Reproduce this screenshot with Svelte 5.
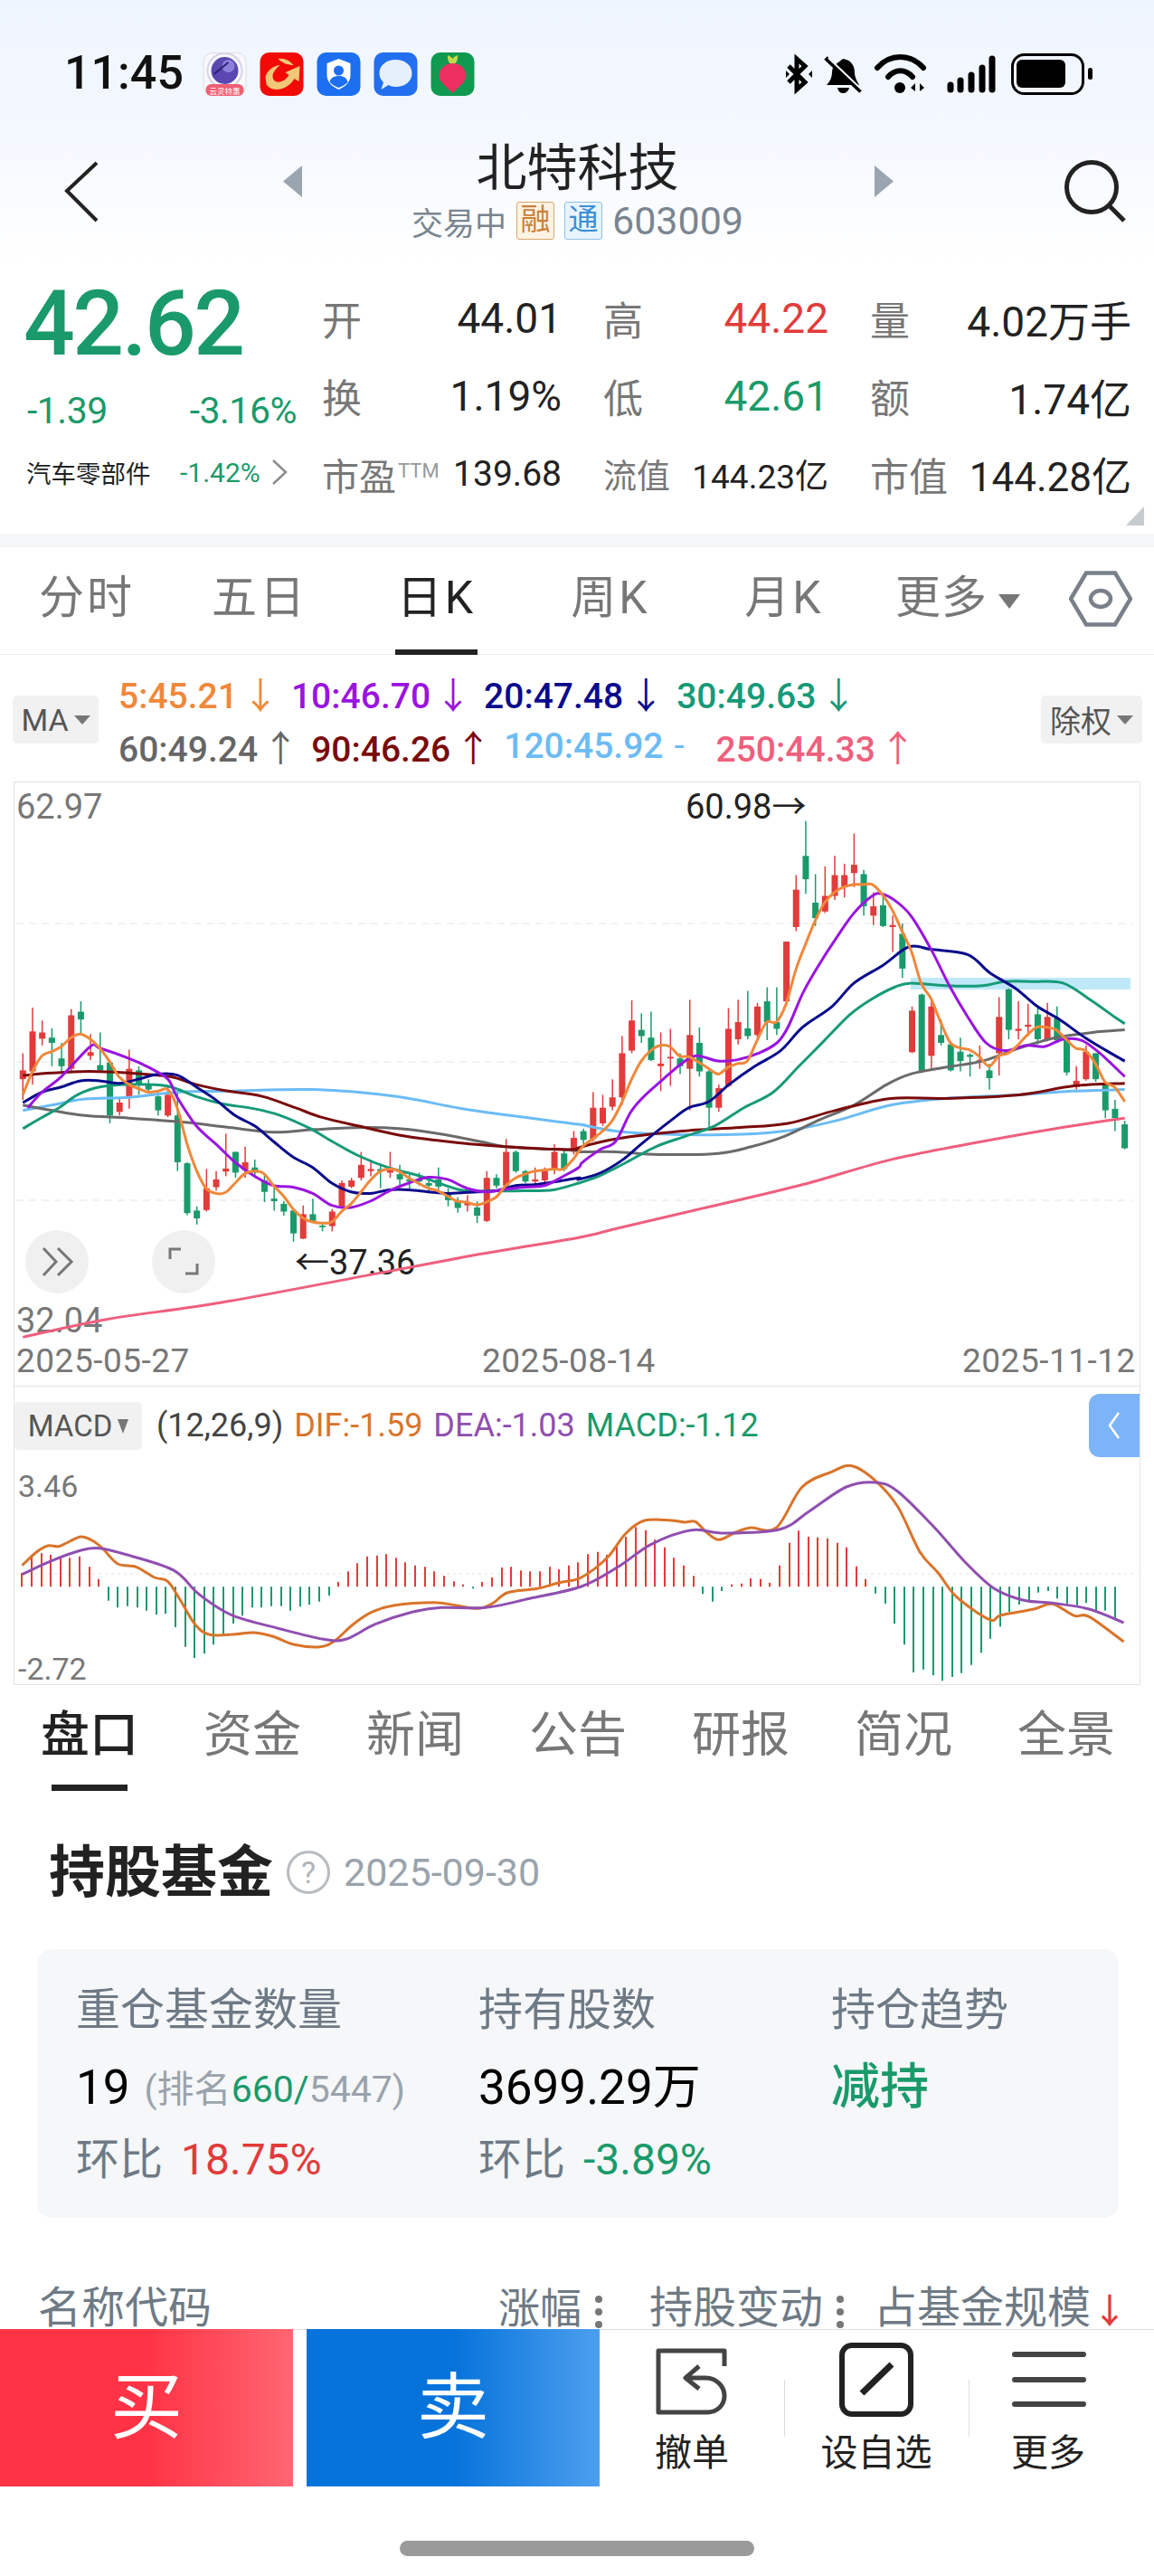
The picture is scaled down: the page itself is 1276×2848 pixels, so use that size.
<script>
	const RED = '#e23b3b';
	const GREEN = '#1a9a6a';

	// chart readings: two scales, one for each half of the k-line chart
	const leftPt = (x, y) => [x / 2.45, 600 + y / 1.742];
	const rightPt = (x, y) => [640 + x / 2.465, 600 + y / 1.742];
	const macdPt = (x, y) => [x / 1.229, 1500 + y / 3];
	const kY = (v) => 600 + v / 1.742;
	const kX = (i) => 25.3 + i * 10.687;

	// wick top, body top, body bottom, wick bottom, up?
	const candles = [
		[985,1018,1035,1075,1],[897,943,1020,1045,1],[922,945,957,970,1],[937,955,965,1010,0],[965,995,1010,1020,0],
		[900,912,1015,1020,1],[885,905,920,948,0],[948,983,990,998,1],[945,1008,1018,1020,0],[1002,1003,1105,1120,0],
		[1070,1080,1098,1105,1],[978,1015,1068,1092,1],[1010,1018,1045,1065,0],[1035,1045,1055,1060,0],[1060,1068,1095,1105,0],
		[1050,1065,1105,1108,1],[1060,1105,1195,1212,0],[1195,1197,1293,1297,0],[1280,1288,1303,1315,0],[1208,1245,1287,1290,1],
		[1212,1228,1243,1250,1],[1140,1207,1213,1222,1],[1175,1175,1215,1225,0],[1165,1195,1210,1225,1],[1190,1205,1215,1225,0],
		[1220,1230,1252,1272,0],[1243,1265,1270,1288,0],[1270,1275,1290,1298,0],[1287,1288,1332,1348,0],[1278,1295,1342,1343,1],
		[1265,1295,1308,1310,0],[1310,1317,1320,1328,0],[1285,1290,1318,1328,1],[1230,1235,1280,1282,1],[1225,1230,1242,1245,1],
		[1175,1200,1225,1230,1],[1190,1208,1212,1222,1],[1200,1208,1212,1245,0],[1175,1205,1215,1225,1],[1200,1218,1228,1240,0],
		[1215,1228,1232,1248,0],[1215,1228,1232,1240,0],[1222,1235,1240,1252,0],[1205,1228,1242,1248,0],[1245,1255,1268,1280,0],
		[1262,1268,1283,1292,0],[1258,1272,1278,1290,1],[1270,1282,1298,1312,0],[1212,1225,1308,1310,1],[1218,1225,1240,1245,0],
		[1150,1175,1240,1245,1],[1172,1175,1212,1215,0],[1210,1212,1232,1235,0],[1205,1228,1232,1240,1],[1205,1212,1230,1235,1],
		[1160,1175,1210,1218,1],[1170,1178,1208,1212,0],[1135,1148,1175,1180,1],[1130,1135,1152,1165,0],[1060,1090,1150,1155,1],
		[1065,1090,1120,1125,1],[1035,1070,1088,1095,1],[952,985,1070,1085,1],[883,922,980,985,1],[908,940,952,965,0],
		[905,955,998,1000,0],[945,1005,1010,1058,1],[938,992,995,1048,1],[985,995,1010,1025,0],[882,950,1015,1095,1],
		[935,965,1020,1030,0],[1015,1020,1090,1130,0],[1045,1052,1090,1098,1],[898,938,1048,1050,1],[882,925,958,968,1],
		[865,937,952,958,0],[888,895,950,955,1],[858,885,925,960,0],[858,925,938,950,0],[770,770,885,890,1],
		[642,670,742,750,1],[538,605,650,678,0],[640,695,725,740,0],[625,682,712,715,1],[605,642,682,690,1],
		[620,642,665,685,1],[562,622,638,665,1],[632,640,702,720,0],[675,702,720,738,1],[680,700,740,742,0],
		[720,738,742,790,1],[735,755,822,840,0],[895,903,983,985,1],[870,872,1020,1022,0],[885,895,990,1015,1],
		[920,950,965,970,0],[965,968,1018,1020,0],[955,982,1000,1020,0],[985,988,992,1030,0],[970,998,1002,1015,1],
		[1005,1018,1033,1055,0],[877,915,985,1028,1],[860,862,940,958,0],[885,938,942,958,1],[890,930,934,952,1],
		[898,910,958,968,0],[888,915,960,962,1],[895,918,960,965,0],[955,958,1022,1028,0],[1010,1038,1050,1055,1],
		[970,982,1035,1038,1],[985,985,1035,1040,0],[1040,1042,1095,1110,0],[1075,1092,1110,1135,0],[1115,1122,1168,1170,0]
	];

	const maLines = [
		{ color: '#ef5f7e', left: [62,1532,285,1498,600,1465,1000,1412,1300,1372,1568,1340], right: [100,1323,300,1290,600,1240,850,1190,1100,1155,1300,1130,1488,1110] },
		{ color: '#6bbcf5', left: [62,1095,140,1085,230,1073,350,1070,480,1060,620,1058,850,1055,1070,1068,1280,1095,1568,1122], right: [0,1122,100,1135,200,1140,400,1142,560,1135,700,1115,850,1085,1000,1072,1200,1065,1350,1058,1488,1055] },
		{ color: '#6a6a6a', left: [62,1085,140,1095,230,1105,350,1110,500,1118,620,1128,740,1137,850,1132,980,1128,1080,1130,1190,1140,1300,1155,1370,1165,1500,1170,1568,1172], right: [0,1175,100,1175,220,1180,380,1178,470,1165,560,1145,650,1115,750,1085,840,1045,905,1025,1000,1012,1100,1000,1200,975,1300,955,1400,945,1488,940] },
		{ color: '#7a0a0a', left: [62,1028,140,1023,240,1020,350,1023,460,1030,530,1045,610,1057,710,1068,800,1090,870,1108,970,1125,1100,1145,1250,1158,1370,1165,1500,1170,1568,1170], right: [0,1167,100,1150,280,1135,440,1128,570,1120,700,1095,850,1072,1000,1072,1200,1065,1350,1048,1488,1043] },
		{ color: '#169a78', left: [62,1130,110,1110,160,1090,210,1065,270,1050,350,1045,450,1048,530,1068,600,1082,690,1092,760,1105,840,1130,900,1155,970,1182,1050,1205,1130,1220,1200,1238,1260,1250,1340,1250,1420,1250,1500,1248,1568,1235], right: [0,1235,60,1220,130,1195,210,1165,290,1145,370,1125,450,1090,530,1060,600,1010,670,960,740,910,800,880,860,858,905,850,1000,855,1100,855,1160,847,1240,847,1320,850,1400,885,1460,915,1488,928] },
		{ color: '#0a0a8c', left: [62,1080,114,1060,166,1050,218,1038,270,1038,322,1043,375,1035,429,1025,480,1027,532,1050,585,1075,637,1105,690,1125,741,1155,794,1185,847,1205,899,1235,951,1252,1003,1255,1055,1248,1107,1248,1160,1252,1212,1255,1292,1252,1344,1250,1397,1240,1448,1238,1500,1233,1568,1225], right: [0,1228,60,1215,120,1190,170,1160,250,1115,300,1090,355,1078,410,1045,480,1010,550,980,610,935,690,895,750,850,830,815,900,780,960,785,1060,795,1120,830,1190,860,1250,895,1310,920,1380,955,1450,985,1488,1000] },
		{ color: '#9a14e0', left: [75,1090,114,1060,166,1030,245,972,270,975,349,995,402,1012,455,1035,480,1070,532,1125,585,1160,637,1195,690,1222,741,1240,794,1243,847,1255,899,1278,951,1282,1003,1270,1055,1250,1107,1235,1160,1224,1212,1228,1265,1245,1317,1252,1370,1247,1422,1243,1475,1240,1526,1222,1568,1205], right: [10,1195,60,1170,100,1155,140,1100,175,1070,230,1035,280,1005,320,990,380,1000,430,998,490,985,540,965,570,935,610,870,650,820,700,765,750,715,800,682,825,678,860,690,905,720,960,785,1010,855,1060,915,1110,965,1160,980,1220,970,1270,972,1320,958,1370,960,1420,985,1488,1030] },
		{ color: '#f0883a', left: [62,1065,88,1020,114,990,140,982,166,972,192,955,218,948,245,958,270,975,296,1000,322,1030,349,1045,375,1053,402,1060,429,1058,455,1055,480,1090,507,1160,532,1210,558,1245,585,1255,611,1253,637,1235,663,1217,690,1212,715,1217,741,1240,768,1260,794,1285,820,1302,847,1310,873,1312,899,1310,925,1290,951,1275,977,1253,1003,1230,1029,1213,1055,1208,1081,1212,1107,1225,1133,1235,1160,1245,1186,1250,1212,1260,1238,1270,1265,1272,1292,1277,1317,1272,1344,1262,1370,1240,1397,1225,1422,1218,1448,1212,1475,1210,1500,1208,1526,1208,1552,1190], right: [10,1165,38,1150,65,1135,91,1115,117,1080,144,1035,170,1000,196,980,222,970,248,972,274,990,301,992,328,1003,355,1015,380,1025,407,1012,433,1005,459,1000,486,960,512,925,538,925,565,890,591,825,618,775,644,730,670,695,697,675,722,665,748,660,776,660,800,660,828,680,855,710,881,750,907,790,933,850,960,880,986,925,1013,965,1040,975,1063,978,1090,990,1118,1010,1145,990,1170,985,1196,970,1222,950,1248,935,1275,935,1301,940,1328,958,1354,975,1381,980,1408,1005,1434,1040,1460,1050,1488,1078] }
	];

	function pairs(flat, map) {
		const out = [];
		for (let i = 0; i < flat.length; i += 2) out.push(map(flat[i], flat[i + 1]));
		return out;
	}

	// catmull-rom through the read points, so the averages stay round
	function smooth(pts) {
		let d = `M${pts[0][0].toFixed(1)} ${pts[0][1].toFixed(1)}`;
		for (let i = 0; i < pts.length - 1; i++) {
			const p0 = pts[i - 1] || pts[i];
			const p1 = pts[i];
			const p2 = pts[i + 1];
			const p3 = pts[i + 2] || p2;
			const c1 = [p1[0] + (p2[0] - p0[0]) / 6, p1[1] + (p2[1] - p0[1]) / 6];
			const c2 = [p2[0] - (p3[0] - p1[0]) / 6, p2[1] - (p3[1] - p1[1]) / 6];
			d += ` C${c1[0].toFixed(1)} ${c1[1].toFixed(1)} ${c2[0].toFixed(1)} ${c2[1].toFixed(1)} ${p2[0].toFixed(1)} ${p2[1].toFixed(1)}`;
		}
		return d;
	}

	const maPaths = maLines.map((l) => ({
		color: l.color,
		d: smooth([...pairs(l.left, leftPt), ...pairs(l.right, rightPt)])
	}));

	const legend = [
		[
			{ t: '5:45.21', a: '↓', c: '#f0883a' },
			{ t: '10:46.70', a: '↓', c: '#9a14e0' },
			{ t: '20:47.48', a: '↓', c: '#0a0a8c' },
			{ t: '30:49.63', a: '↓', c: '#169a78' }
		],
		[
			{ t: '60:49.24', a: '↑', c: '#666666' },
			{ t: '90:46.26', a: '↑', c: '#7a0a0a' },
			{ t: '120:45.92', a: '-', c: '#6bbcf5' },
			{ t: '250:44.33', a: '↑', c: '#ef5f7e' }
		]
	];

	// macd histogram: bar tip on the zoomed scale, baseline at 766
	const histTips = [
		720,660,655,660,665,670,665,700,740,812,835,830,835,845,858,855,900,965,1002,988,958,930,888,862,835,835,830,830,845,832,825,815,795,
		750,715,688,665,662,658,670,685,695,700,715,730,748,758,772,750,735,702,700,712,715,715,700,708,695,685,658,650,660,630,600,568,578,610,635,670,695,730,
		790,815,780,758,755,738,740,752,695,620,580,600,602,605,620,635,698,740,
		788,822,888,958,1050,1040,1060,1078,1065,1052,1025,985,938,898,850,825,810,785,780,805,822,830,820,845,845,870
	];
	const histBase = macdPt(0, 766)[1];
	const hist = histTips.map((tip, i) => ({
		x: Math.round(macdPt(30 + i * 13.03, 0)[0]),
		y: macdPt(0, tip)[1],
		color: tip < 766 ? RED : GREEN
	}));
	const dif = smooth(pairs([30,695,50,650,65,630,80,632,95,615,110,600,125,612,140,640,160,690,185,700,210,735,228,748,245,810,265,890,285,925,320,923,345,918,370,930,400,958,435,965,455,945,480,890,505,850,535,828,590,818,620,828,650,838,670,820,690,785,730,772,760,752,790,735,825,670,850,590,875,547,910,545,930,552,945,550,960,585,977,610,1000,585,1020,570,1055,570,1090,435,1130,385,1158,365,1190,415,1220,500,1250,650,1275,720,1300,800,1345,875,1360,860,1405,840,1430,823,1460,862,1480,865,1527,948], macdPt));
	const dea = smooth(pairs([30,725,70,680,110,645,135,638,165,655,235,710,270,790,315,860,380,905,440,940,470,940,510,890,560,850,600,835,660,835,720,805,790,765,840,700,885,625,940,578,985,588,1060,575,1100,515,1150,435,1190,420,1220,450,1270,570,1310,680,1350,770,1390,810,1430,820,1480,840,1527,885], macdPt));

	const rangeTabs = ['分时', '五日', '日K', '周K', '月K'];
	const infoTabs = ['盘口', '资金', '新闻', '公告', '研报', '简况', '全景'];
</script>

<div class="page">
	<div class="head">
		<div class="status">
			<span class="time">11:45</span>
			<div class="apps">
				<svg class="app" viewBox="0 0 48 48">
					<rect x="0.5" y="0.5" width="47" height="47" rx="10" fill="#f8f8fd" stroke="#ddd" />
					<circle cx="24" cy="20" r="19" fill="none" stroke="#d5d3e6" stroke-width="2" />
					<circle cx="24" cy="20" r="15" fill="#5a47b0" />
					<circle cx="28" cy="15" r="7" fill="#8d80dd" />
					<path d="M12 24 L28 11" stroke="#2c2170" stroke-width="2" />
					<rect x="3" y="35" width="42" height="13" rx="6" fill="#ef5f74" />
					<text x="24" y="45.5" class="app-tag">云灵特惠</text>
				</svg>
				<svg class="app" viewBox="0 0 48 48">
					<rect width="48" height="48" rx="10" fill="#f20a06" />
					<path d="M20 7 C27 6 33 9 37 14 C31 14 25 12 20 7Z M6 27 C8 19 15 15 22 14 C16 19 12 25 15 30 C18 35 27 33 32 25 L28 22 L44 15 L43 32 L38 29 C30 42 13 45 7 35Z" fill="#f1c778" />
				</svg>
				<svg class="app" viewBox="0 0 48 48">
					<rect width="48" height="48" rx="10" fill="#1b6ff0" />
					<path d="M24 7 L37 12 V25 C37 33 31 38 24 41 C17 38 11 33 11 25 V12Z" fill="#fff" />
					<circle cx="24" cy="20" r="5.5" fill="#1b6ff0" />
					<path d="M14 33 C15 27 20 26 24 26 C28 26 33 27 34 33 C31 36 27 38 24 39 C21 38 17 36 14 33Z" fill="#1b6ff0" />
				</svg>
				<svg class="app" viewBox="0 0 48 48">
					<rect width="48" height="48" rx="10" fill="#226ff0" />
					<path d="M24 8 C34 8 42 14 42 23 C42 32 34 38 24 38 C21 38 18 37 16 36 L8 41 L10.500 33 C7.500 30 6 27 6 23 C6 14 14 8 24 8Z" fill="#e6f0fd" />
				</svg>
				<svg class="app" viewBox="0 0 48 48">
					<rect width="48" height="48" rx="10" fill="#0f9a50" />
					<path d="M24 14 C20 12 18 9 18.500 3 C21 4 23 5 24 7 C25 5 27 4 29.500 3 C30 9 28 12 24 14Z" fill="#c7d94a" />
					<path d="M24 12 C33 12 39 19 39 26 C39 33 29 39 24 45 C19 39 9 33 9 26 C9 19 15 12 24 12Z" fill="#ee2f62" />
				</svg>
			</div>
			<svg class="sys" viewBox="0 0 360 64">
				<path d="M12 23 L30 41 L21 49 V15 L30 23 L12 41" fill="none" stroke="#000" stroke-width="5" />
				<path d="M9 28 L13 32 L9 36Z M38 28 L34 32 L38 36Z" fill="#000" />
				<path d="M72 15 C81 16 85 23 85 30 C85 36 88 40 90 44 H54 C58 40 60 35 60 30 C60 27 61 24 63 22Z" fill="#000" />
				<path d="M66 47 H79 C78 51 75 53 72 53 C69 53 67 51 66 47Z" fill="#000" />
				<path d="M53 14 L92 51" stroke="#000" stroke-width="5" />
				<path d="M56 14 L95 51" stroke="#f4f8ff" stroke-width="2" />
				<path d="M110 25 C124 9 147 9 161 25" fill="none" stroke="#000" stroke-width="6" stroke-linecap="round" />
				<path d="M122 35 C130 26 141 26 149 35" fill="none" stroke="#000" stroke-width="6" stroke-linecap="round" />
				<circle cx="135" cy="47" r="6" fill="#000" />
				<path d="M152 42 V51 L147 47Z M157 42 V51 L162 47Z" fill="#000" />
				<g stroke="#000" stroke-width="7" stroke-linecap="round">
					<path d="M191 44 V49" /><path d="M202 39 V49" /><path d="M214 33 V49" /><path d="M226 25 V49" /><path d="M237 15 V49" />
				</g>
				<rect x="259.500" y="10.500" width="78" height="43" rx="13" fill="none" stroke="#000" stroke-width="3" />
				<rect x="264" y="16" width="54" height="31" rx="6" fill="#000" />
				<rect x="343" y="25" width="5" height="13" rx="2.500" fill="#000" />
			</svg>
		</div>

		<div class="nav">
			<svg class="back" viewBox="0 0 40 70"><path d="M36 2 L3 33 L36 66" fill="none" stroke="#222" stroke-width="4" /></svg>
			<svg class="tri" viewBox="0 0 21 35"><path d="M21 0 V35 L0 17.500Z" fill="#9aa5b0" /></svg>
			<div class="nav-mid">
				<div class="title">北特科技</div>
				<div class="sub">
					<span>交易中</span>
					<span class="tag tag-rong">融</span>
					<span class="tag tag-tong">通</span>
					<span class="code">603009</span>
				</div>
			</div>
			<svg class="tri" viewBox="0 0 21 35"><path d="M0 0 V35 L21 17.500Z" fill="#9aa5b0" /></svg>
			<svg class="search" viewBox="0 0 70 70"><circle cx="31" cy="30" r="27.500" fill="none" stroke="#222" stroke-width="5" /><path d="M50 50 L67 67" stroke="#222" stroke-width="5" /></svg>
		</div>
	</div>

	<div class="quote">
		<div class="price-box">
			<div class="price">42.62</div>
			<div class="chg"><span>-1.39</span><span>-3.16%</span></div>
			<div class="sector">
				<span class="sector-name">汽车零部件</span>
				<span class="sector-pct">-1.42%</span>
				<svg class="sector-go" viewBox="0 0 20 30"><path d="M3 2 L17 15 L3 28" fill="none" stroke="#8c8c8c" stroke-width="2.500" /></svg>
			</div>
		</div>
		<div class="stats">
			<div class="stat"><span class="k">开</span><span class="v">44.01</span></div>
			<div class="stat"><span class="k">高</span><span class="v red">44.22</span></div>
			<div class="stat"><span class="k">量</span><span class="v">4.02万手</span></div>
			<div class="stat"><span class="k">换</span><span class="v">1.19%</span></div>
			<div class="stat"><span class="k">低</span><span class="v green">42.61</span></div>
			<div class="stat"><span class="k">额</span><span class="v">1.74亿</span></div>
			<div class="stat pe"><span class="k">市盈<sup>TTM</sup></span><span class="v">139.68</span></div>
			<div class="stat tiny"><span class="k">流值</span><span class="v">144.23亿</span></div>
			<div class="stat cap"><span class="k">市值</span><span class="v">144.28亿</span></div>
		</div>
		<svg class="corner" viewBox="0 0 20 21"><path d="M20 0 V21 H0Z" fill="#c6cbd0" /></svg>
	</div>
	<div class="band"></div>

	<div class="range-tabs">
		{#each rangeTabs as tab}
			<div class="range-tab" class:on={tab === '日K'}>{tab}</div>
		{/each}
		<div class="range-tab more">更多<i class="caret big"></i></div>
		<svg class="hex" viewBox="0 0 70 62">
			<path d="M2 31 L19 2.500 H51 L68 31 L51 59.500 H19Z" fill="none" stroke="#7a8089" stroke-width="4.500" />
			<ellipse cx="35" cy="31" rx="11" ry="9" fill="none" stroke="#7a8089" stroke-width="4.500" />
		</svg>
	</div>

	<div class="ma-bar">
		<div class="pick pick-ma">MA<i class="caret"></i></div>
		<div class="legend">
			{#each legend as row}
				<div class="legend-row">
					{#each row as item}
						<span style="color: {item.c}">{item.t}<b class:flat={item.a === '-'}>{item.a}</b></span>
					{/each}
				</div>
			{/each}
		</div>
		<div class="pick pick-r">除权<i class="caret"></i></div>
	</div>

	<div class="frame frame-top">
		<svg class="kchart" viewBox="16 866 1244 620">
			<g stroke="#e4e4e4" stroke-width="1" stroke-dasharray="8 6">
				<path d="M18 1022 H1252" /><path d="M18 1175 H1252" /><path d="M18 1328 H1252" />
			</g>
			<rect x="1007" y="1082" width="243" height="13" fill="#bfe8f8" />
			{#each candles as c, i}
				<g fill={c[4] ? RED : GREEN} stroke={c[4] ? RED : GREEN}>
					<path d="M{kX(i)} {kY(c[0])} V{kY(c[3])}" stroke-width="1.500" />
					<rect x={kX(i) - 3.5} y={kY(c[1])} width="7" height={Math.max(kY(c[2]) - kY(c[1]), 1.5)} stroke="none" />
				</g>
			{/each}
			<text x="18" y="906" class="axis">62.97</text>
			<text x="18" y="1474" class="axis">32.04</text>
			<text x="758" y="906" class="mark">60.98→</text>
			<text x="326" y="1410" class="mark">←37.36</text>
			{#each maPaths as line}
				<path d={line.d} fill="none" stroke={line.color} stroke-width="3" stroke-linejoin="round" />
			{/each}
			<circle cx="63" cy="1396" r="35" fill="#f0f0f0" />
			<path d="M48 1381 L62 1396 L48 1411 M64 1381 L79 1396 L64 1411" fill="none" stroke="#777" stroke-width="3" />
			<circle cx="203" cy="1396" r="35" fill="#f0f0f0" />
			<path d="M188 1393 V1382 H200 M218 1398 V1409 H205" fill="none" stroke="#777" stroke-width="3" />
		</svg>
		<div class="dates"><span>2025-05-27</span><span>2025-08-14</span><span>2025-11-12</span></div>
	</div>

	<div class="frame frame-macd">
		<div class="macd-head">
			<div class="pick pick-macd">MACD<i class="caret small"></i></div>
			<span class="macd-val ink">(12,26,9)</span>
			<span class="macd-val dif">DIF:-1.59</span>
			<span class="macd-val dea">DEA:-1.03</span>
			<span class="macd-val macd">MACD:-1.12</span>
			<div class="fold"><svg viewBox="0 0 20 40"><path d="M15 6 L5 20 L15 34" fill="none" stroke="#fff" stroke-width="2.500" /></svg></div>
		</div>
		<svg class="macd-chart" viewBox="16 1612 1244 251">
			<path d="M18 1741 H1258" stroke="#e0e0e0" stroke-width="1" stroke-dasharray="3 4" />
			{#each hist as bar}
				<path d="M{bar.x} {histBase} V{bar.y}" stroke={bar.color} stroke-width="2" />
			{/each}
			<text x="20" y="1656" class="axis small">3.46</text>
			<text x="20" y="1858" class="axis small">-2.72</text>
			<path d={dif} fill="none" stroke="#d9742a" stroke-width="3" stroke-linejoin="round" />
			<path d={dea} fill="none" stroke="#8f4fb0" stroke-width="3" stroke-linejoin="round" />
		</svg>
	</div>

	<div class="info-tabs">
		{#each infoTabs as tab, i}
			<div class="info-tab" class:on={i === 0}>{tab}</div>
		{/each}
	</div>

	<div class="fund-title">
		<h2>持股基金</h2>
		<svg class="help" viewBox="0 0 50 50">
			<circle cx="25" cy="25" r="22.500" fill="none" stroke="#b8bcc0" stroke-width="3" />
			<text x="25" y="37" class="help-q">?</text>
		</svg>
		<span class="fund-date">2025-09-30</span>
	</div>

	<div class="fund-card">
		<div class="fund-col">
			<div class="fund-label">重仓基金数量</div>
			<div class="fund-num">19<span class="rank">(排名<em>660/</em>5447)</span></div>
			<div class="fund-rate">环比<span class="red">18.75%</span></div>
		</div>
		<div class="fund-col">
			<div class="fund-label">持有股数</div>
			<div class="fund-num">3699.29万</div>
			<div class="fund-rate">环比<span class="green">-3.89%</span></div>
		</div>
		<div class="fund-col">
			<div class="fund-label">持仓趋势</div>
			<div class="fund-num trend">减持</div>
		</div>
	</div>

	<div class="fund-head">
		<span class="name-col">名称代码</span>
		<span class="sort s1">涨幅<i class="dots"></i></span>
		<span class="sort s2">持股变动<i class="dots"></i></span>
		<span class="sort s3">占基金规模<b>↓</b></span>
	</div>

	<div class="actions">
		<div class="trade buy">买</div>
		<div class="trade sell">卖</div>
		<div class="tool">
			<svg viewBox="0 0 80 75" class="ico-undo">
				<path d="M48 20 L33 33 L48 45 M33 33 H55 C68 33 76 43 76 53 C76 63 68 71 57 71 H3 V3 H76 V20" fill="none" stroke="#444" stroke-width="5" stroke-linejoin="round" />
			</svg>
			<span>撤单</span>
		</div>
		<div class="tool sep">
			<svg viewBox="0 0 82 82" class="ico-edit">
				<rect x="3" y="3" width="76" height="76" rx="11" fill="none" stroke="#222" stroke-width="6" />
				<path d="M58 24 L25 56" stroke="#222" stroke-width="7" />
			</svg>
			<span>设自选</span>
		</div>
		<div class="tool sep last">
			<svg viewBox="0 0 82 64" class="ico-menu">
				<path d="M3 4 H79 M3 32 H79 M3 59 H79" stroke="#444" stroke-width="6" stroke-linecap="round" />
			</svg>
			<span>更多</span>
		</div>
	</div>

	<div class="home-area"><div class="home-bar"></div></div>
</div>

<style>
	:global(body) {
		margin: 0;
		background: #fff;
	}
	.page {
		width: 1276px;
		height: 2848px;
		overflow: hidden;
		font-family: Roboto, 'Noto Sans CJK SC', sans-serif;
		color: #222;
	}
	.red {
		color: #e23b3b;
	}
	.green {
		color: #1a9a6a;
	}

	/* top */
	.head {
		height: 290px;
		background: linear-gradient(#eff5ff, #f4f8ff 150px, #fff 290px);
	}
	.status {
		height: 150px;
		box-sizing: border-box;
		padding-top: 58px;
		display: flex;
		align-items: flex-start;
	}
	.time {
		margin-left: 71px;
		width: 153px;
		font-size: 52px;
		line-height: 46px;
		font-weight: 500;
		color: #111;
	}
	.apps {
		display: flex;
		gap: 14px;
	}
	.app {
		width: 49px;
		height: 48px;
		display: block;
	}
	.app-tag {
		font-size: 8.5px;
		fill: #fff;
		text-anchor: middle;
	}
	.sys {
		width: 360px;
		height: 64px;
		margin-left: 335px;
		margin-top: -8px;
	}
	.nav {
		height: 140px;
		display: grid;
		grid-template-columns: 313px 21px 1fr 22px 287px;
		align-items: start;
	}
	.back {
		width: 40px;
		height: 70px;
		margin: 28px 0 0 71px;
	}
	.tri {
		width: 21px;
		height: 35px;
		margin-top: 33px;
	}
	.nav-mid {
		padding-right: 24px;
		text-align: center;
	}
	.title {
		font-size: 56px;
		line-height: 72px;
		color: #222;
	}
	.sub {
		display: flex;
		justify-content: center;
		align-items: center;
		gap: 11px;
		height: 44px;
		font-size: 35px;
		color: #7a8590;
	}
	.tag {
		width: 42px;
		height: 42px;
		box-sizing: border-box;
		border-radius: 3px;
		font-size: 33px;
		line-height: 38px;
		text-align: center;
	}
	.tag-rong {
		background: #fdf3e3;
		border: 1px solid #d9a56e;
		color: #c8803c;
	}
	.tag-tong {
		background: #e8f3fc;
		border: 1px solid #8fc0e6;
		color: #3a8fd6;
	}
	.code {
		font-size: 43px;
	}
	.search {
		width: 70px;
		height: 70px;
		margin: 27px 0 0 187px;
	}

	/* quote */
	.quote {
		height: 300px;
		position: relative;
		display: flex;
	}
	.price-box {
		width: 356px;
		flex: none;
		box-sizing: border-box;
		padding-left: 26px;
	}
	.price {
		font-size: 100px;
		line-height: 100px;
		margin-top: 18px;
		font-weight: 500;
		letter-spacing: -2.5px;
		color: #1a9a6a;
	}
	.chg {
		display: flex;
		justify-content: space-between;
		width: 298px;
		margin: 26px 0 0 4px;
		font-size: 41px;
		line-height: 40px;
		letter-spacing: -0.5px;
		color: #1a9a6a;
	}
	.sector {
		display: flex;
		align-items: center;
		margin: 28px 0 0 3px;
		height: 40px;
	}
	.sector-name {
		width: 170px;
		font-size: 27.5px;
	}
	.sector-pct {
		width: 100px;
		font-size: 30px;
		color: #1a9a6a;
		white-space: nowrap;
	}
	.sector-go {
		width: 20px;
		height: 30px;
	}
	.stats {
		display: grid;
		grid-template-columns: 265px 249px 289px;
		column-gap: 46px;
		grid-auto-rows: 86px;
		padding-top: 19px;
	}
	.stat {
		display: flex;
		justify-content: space-between;
		align-items: center;
		font-size: 46px;
	}
	.k {
		color: #777;
		white-space: nowrap;
		font-size: 44px;
	}
	.v {
		white-space: nowrap;
	}
	.stat.pe .k {
		font-size: 41px;
	}
	.stat.pe .v {
		font-size: 39px;
	}
	.stat.tiny .k,
	.stat.tiny .v {
		font-size: 37px;
	}
	.stat.cap .k {
		font-size: 43px;
	}
	.stat.cap .v {
		font-size: 44px;
	}
	sup {
		font-size: 22px;
		vertical-align: 14px;
		line-height: 0;
		margin-left: 2px;
		color: #999;
	}
	.corner {
		position: absolute;
		left: 1245px;
		top: 270px;
		width: 20px;
		height: 21px;
	}
	.band {
		height: 15px;
		background: #f5f6f8;
	}

	/* period tabs */
	.range-tabs {
		height: 118px;
		display: flex;
		border-bottom: 1px solid #eee;
		font-size: 50px;
		color: #777;
	}
	.range-tab {
		flex: none;
		box-sizing: border-box;
		text-align: center;
		line-height: 112px;
		letter-spacing: 3px;
		white-space: nowrap;
	}
	.range-tab:nth-child(1) {
		width: 106px;
		margin-left: 43px;
		margin-right: 85px;
	}
	.range-tab:nth-child(2) {
		width: 106px;
		margin-right: 97px;
	}
	.range-tab:nth-child(3) {
		width: 91px;
		margin-right: 102px;
	}
	.range-tab:nth-child(4) {
		width: 90px;
		margin-right: 103px;
	}
	.range-tab:nth-child(5) {
		width: 88px;
		margin-right: 79px;
	}
	.range-tab.on {
		color: #222;
		border-bottom: 6px solid #222;
		height: 119px;
	}
	.range-tab.more {
		letter-spacing: 1px;
		margin-right: 54px;
		width: 138px;
		text-align: left;
	}
	.caret {
		display: inline-block;
		width: 0;
		height: 0;
		margin-left: 6px;
		vertical-align: middle;
		border-left: 9px solid transparent;
		border-right: 9px solid transparent;
		border-top: 10px solid #777;
	}
	.caret.big {
		margin-left: 12px;
		border-left-width: 12px;
		border-right-width: 12px;
		border-top-width: 16px;
	}
	.caret.small {
		border-left-width: 6px;
		border-right-width: 6px;
		border-top-width: 16px;
	}
	.hex {
		width: 70px;
		height: 62px;
		margin-top: 26px;
		flex: none;
	}

	/* MA legend */
	.ma-bar {
		height: 140px;
		display: flex;
		align-items: flex-start;
		padding-left: 14px;
	}
	.pick {
		flex: none;
		height: 53px;
		box-sizing: border-box;
		background: #f1f1f1;
		border-radius: 5px;
		display: flex;
		align-items: center;
		justify-content: center;
		font-size: 34px;
		color: #555;
		margin-top: 45px;
	}
	.pick-ma {
		width: 95px;
	}
	.pick-r {
		width: 112px;
		margin-left: auto;
		margin-right: 13px;
	}
	.legend {
		margin-left: 22px;
		padding-top: 12px;
	}
	.legend-row {
		display: flex;
		gap: 20px;
		height: 59px;
		align-items: center;
		font-size: 39px;
		font-weight: 500;
		white-space: nowrap;
	}
	.legend-row b {
		display: inline-block;
		width: 34px;
		margin-left: 5px;
		font-weight: 400;
		font-size: 40px;
	}
	.legend-row b.flat {
		width: 26px;
		margin-left: 12px;
	}

	/* charts */
	.frame {
		margin: 0 15px;
		border-left: 1px solid #e4e4e4;
		border-right: 1px solid #e4e4e4;
		border-bottom: 1px solid #e4e4e4;
	}
	.frame-top {
		border-top: 1px solid #e4e4e4;
		height: 667px;
	}
	.kchart,
	.macd-chart {
		display: block;
		width: 1244px;
		overflow: visible;
	}
	.kchart {
		height: 620px;
	}
	.macd-chart {
		height: 251px;
	}
	.axis {
		font-size: 38px;
		fill: #777;
	}
	.axis.small {
		font-size: 34px;
	}
	.mark {
		font-size: 38px;
		fill: #222;
	}
	.dates {
		height: 47px;
		display: grid;
		grid-template-columns: 515px 531px auto;
		padding-left: 2px;
		font-size: 37px;
		line-height: 40px;
		letter-spacing: 0.5px;
		color: #777;
		white-space: nowrap;
	}
	.frame-macd {
		height: 329px;
	}
	.macd-head {
		height: 78px;
		display: flex;
		align-items: flex-start;
		gap: 12px;
	}
	.pick-macd {
		width: 141px;
		margin: 17px 4px 0 0;
		font-size: 33px;
	}
	.macd-val {
		font-size: 36px;
		line-height: 86px;
		white-space: nowrap;
	}
	.ink {
		color: #444;
	}
	.dif {
		color: #d9742a;
	}
	.dea {
		color: #8f4fb0;
	}
	.macd {
		color: #1a9a6a;
	}
	.fold {
		width: 56px;
		height: 70px;
		margin: 8px 0 0 auto;
		background: #7db4f8;
		border-radius: 12px 0 0 12px;
		display: flex;
		align-items: center;
		justify-content: center;
	}
	.fold svg {
		width: 20px;
		height: 40px;
	}

	/* info tabs */
	.info-tabs {
		height: 117px;
		display: flex;
		padding-left: 45px;
		gap: 72px;
	}
	.info-tab {
		width: 108px;
		font-size: 54px;
		line-height: 54px;
		padding-top: 29px;
		color: #777;
		position: relative;
		white-space: nowrap;
	}
	.info-tab.on {
		color: #222;
		font-weight: 500;
	}
	.info-tab.on::after {
		content: '';
		position: absolute;
		left: 12px;
		right: 12px;
		top: 110px;
		height: 7px;
		background: #222;
	}

	/* fund holdings */
	.fund-title {
		height: 175px;
		box-sizing: border-box;
		padding: 61px 0 0 54px;
		display: flex;
		align-items: flex-start;
	}
	h2 {
		margin: 0;
		font-size: 62px;
		line-height: 60px;
		font-weight: 700;
		color: #222;
	}
	.help {
		width: 50px;
		height: 50px;
		margin: 4px 0 0 14px;
	}
	.help-q {
		font-size: 34px;
		fill: #b0b4b8;
		text-anchor: middle;
	}
	.fund-date {
		margin-left: 14px;
		margin-top: 6px;
		font-size: 43px;
		line-height: 46px;
		color: #9aa3ac;
	}
	.fund-card {
		margin: 0 39px 0 41px;
		height: 297px;
		box-sizing: border-box;
		padding: 38px 0 0 43px;
		background: #f5f7f9;
		border-radius: 16px;
		display: grid;
		grid-template-columns: 445px 390px 1fr;
	}
	.fund-label {
		font-size: 49px;
		line-height: 60px;
		color: #6e7a85;
		white-space: nowrap;
	}
	.fund-num {
		margin-top: 20px;
		height: 70px;
		font-size: 53px;
		line-height: 70px;
		color: #000;
		white-space: nowrap;
	}
	.trend {
		color: #1a9a6a;
		font-size: 54px;
		font-weight: 500;
	}
	.rank {
		margin-left: 16px;
		font-size: 41px;
		color: #9aa3ac;
		vertical-align: 2px;
	}
	.rank em {
		font-style: normal;
		color: #1a9a6a;
	}
	.fund-rate {
		margin-top: 15px;
		font-size: 48px;
		line-height: 60px;
		color: #6e7a85;
		white-space: nowrap;
	}
	.fund-rate span {
		margin-left: 20px;
	}
	.fund-head {
		height: 123px;
		box-sizing: border-box;
		padding-top: 71px;
		display: flex;
		font-size: 48px;
		line-height: 58px;
		color: #6e7a85;
		white-space: nowrap;
	}
	.name-col {
		margin-left: 42px;
		width: 509px;
	}
	.s1 {
		width: 167px;
		font-size: 46px;
	}
	.s2 {
		width: 248px;
		font-size: 48px;
	}
	.s3 {
		font-size: 48px;
	}
	.s3 b {
		font-size: 38px;
		font-weight: 500;
		color: #e23b3b;
		margin-left: 2px;
	}
	.dots {
		display: inline-block;
		width: 8px;
		height: 8px;
		margin-left: 15px;
		vertical-align: 8px;
		border-radius: 50%;
		background: #777;
		box-shadow: 0 -14px 0 #777, 0 14px 0 #777;
	}

	/* action bar */
	.actions {
		height: 174px;
		display: flex;
		box-shadow: inset 0 1px 0 #dcdcdc;
	}
	.trade {
		width: 324px;
		flex: none;
		font-size: 80px;
		line-height: 174px;
		text-align: center;
		color: #fff;
	}
	.buy {
		background: linear-gradient(90deg, #ff3345 50%, #ff6672);
	}
	.sell {
		margin-left: 15px;
		background: linear-gradient(90deg, #0673db 50%, #4d9fee);
	}
	.tool {
		width: 204px;
		flex: none;
		position: relative;
		display: flex;
		flex-direction: column;
		align-items: center;
		font-size: 41px;
		color: #222;
	}
	.tool span {
		position: absolute;
		top: 113px;
		line-height: 48px;
		white-space: nowrap;
	}
	.tool.sep::before {
		content: '';
		position: absolute;
		left: 0;
		top: 56px;
		width: 1px;
		height: 63px;
		background: #ddd;
	}
	.tool.last {
		padding-right: 28px;
		box-sizing: border-box;
		width: 205px;
	}
	.tool.last span {
		left: 47px;
	}
	.ico-undo {
		width: 80px;
		height: 75px;
		margin-top: 21px;
	}
	.ico-edit {
		width: 82px;
		height: 82px;
		margin-top: 15px;
	}
	.ico-menu {
		width: 82px;
		height: 64px;
		margin-top: 24px;
	}
	.home-area {
		padding-top: 60px;
		display: flex;
		justify-content: center;
	}
	.home-bar {
		width: 392px;
		height: 17px;
		border-radius: 9px;
		background: #9a9a9a;
	}
</style>
